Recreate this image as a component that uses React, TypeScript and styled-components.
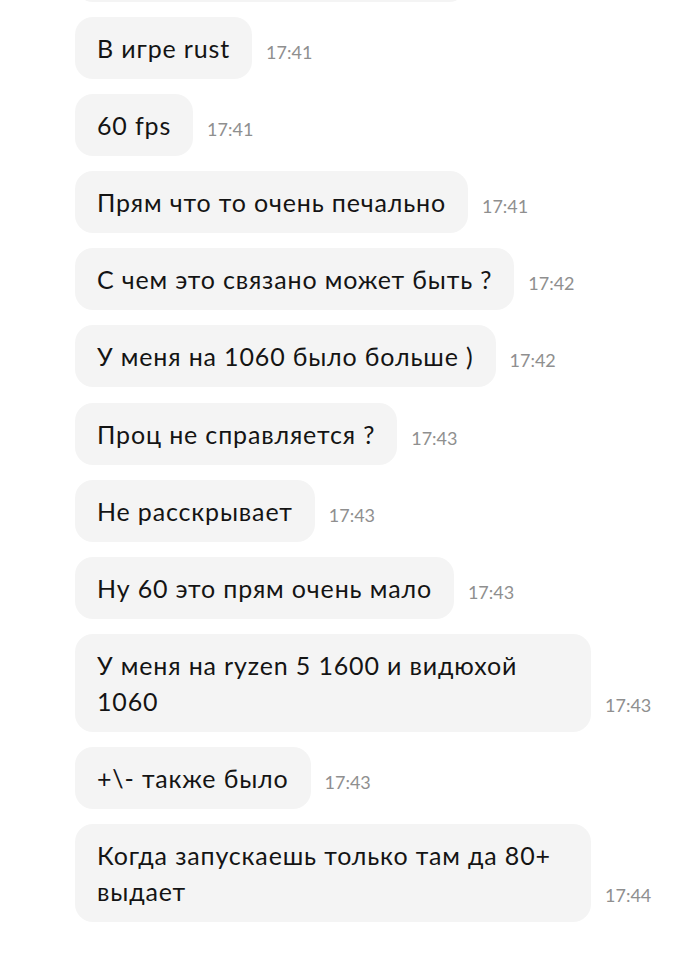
import styled, { createGlobalStyle } from 'styled-components';

type Message = {
  text: string;
  time: string;
};

const messages: Message[] = [
  { text: 'В игре rust', time: '17:41' },
  { text: '60 fps', time: '17:41' },
  { text: 'Прям что то очень печально', time: '17:41' },
  { text: 'С чем это связано может быть ?', time: '17:42' },
  { text: 'У меня на 1060 было больше )', time: '17:42' },
  { text: 'Проц не справляется ?', time: '17:43' },
  { text: 'Не расскрывает', time: '17:43' },
  { text: 'Ну 60 это прям очень мало', time: '17:43' },
  { text: 'У меня на ryzen 5 1600 и видюхой 1060', time: '17:43' },
  { text: '+\\- также было', time: '17:43' },
  { text: 'Когда запускаешь только там да 80+ выдает', time: '17:44' },
];

const App = () => {
  return (
    <>
      <GlobalStyle />
      <ChatList>
        {/* previous message, scrolled mostly out of view */}
        <MessageRow>
          <ClippedBubble />
        </MessageRow>
        {messages.map((m, i) => (
          <MessageRow key={i}>
            <Bubble>{m.text}</Bubble>
            <Time>{m.time}</Time>
          </MessageRow>
        ))}
      </ChatList>
    </>
  );
};

export default App;

const GlobalStyle = createGlobalStyle`
  html, body {
    margin: 0;
    padding: 0;
    background: #ffffff;
    overflow: hidden;
  }
  body {
    font-family: Lato, "Open Sans", "Liberation Sans", sans-serif;
  }
`;

const ChatList = styled.ul`
  list-style: none;
  margin: 0;
  padding: 0 0 0 75px;
  display: flex;
  flex-direction: column;
  gap: 15.1px;
  height: 953px;
  overflow: hidden;
`;

const MessageRow = styled.li`
  display: flex;
  align-items: flex-end;
`;

const Bubble = styled.div`
  box-sizing: border-box;
  max-width: 516px;
  padding: 13px 22px;
  background: #f4f4f4;
  border-radius: 18px;
  color: #141414;
  font-size: 25px;
  letter-spacing: 0.85px;
  line-height: 36px;
`;

const ClippedBubble = styled.div`
  width: 392px;
  height: 62px;
  margin-top: -60px;
  background: #f4f4f4;
  border-radius: 18px;
`;

const Time = styled.span`
  margin: 0 0 16px 14px;
  color: #8f8f8f;
  font-size: 18px;
  line-height: 22px;
  white-space: nowrap;
`;
